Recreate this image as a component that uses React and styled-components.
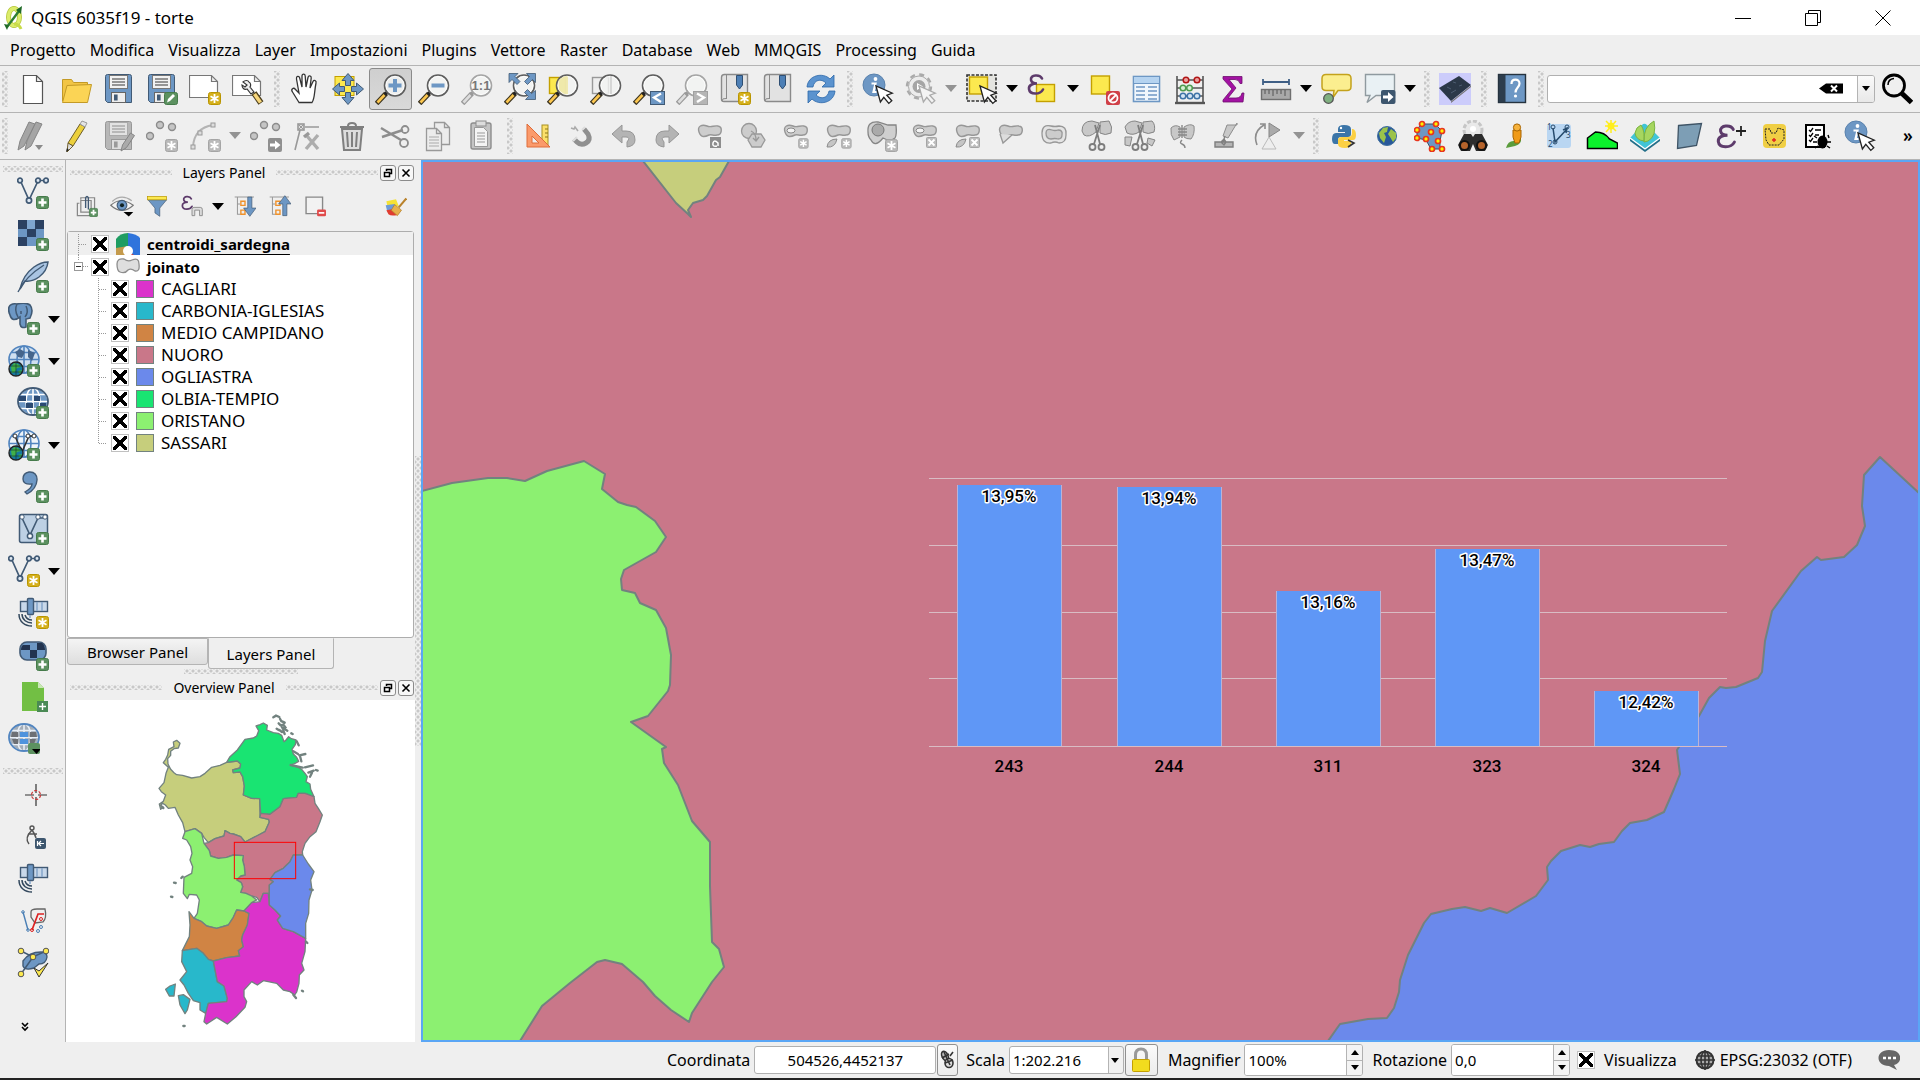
import React from "react";
import styled, { createGlobalStyle, css } from "styled-components";

const GlobalStyle = createGlobalStyle`
  * { box-sizing: border-box; }
  body {
    margin: 0;
    background: #efefef;
    color: #000;
    font-family: "Noto Sans", "Liberation Sans", sans-serif;
    font-size: 15px;
  }
  button, input, select {
    font: inherit;
    color: inherit;
    margin: 0;
    padding: 0;
  }
`;

const BLUE = "#6d97c4";
const NAVY = "#415a75";
const GRAY = "#b4b4b4";
const DARK = "#8c8c8c";
const OUTLINE = "#72827f";

/* ---------- shared icon parts ---------- */

const Svg = ({ size = 32, children }) => (
  <svg width={size} height={size} viewBox="0 0 32 32" fill="none" aria-hidden="true">
    {children}
  </svg>
);

const Plus = () => (
  <g>
    <rect x="19.5" y="19.5" width="12" height="12" rx="2" fill="#5c9160" stroke="#457a4a" />
    <path d="M25.5 21.5v8M21.5 25.5h8" stroke="#fff" strokeWidth="2.6" />
  </g>
);

const Star = ({ off }) => (
  <g>
    <rect
      x="19.5"
      y="19.5"
      width="12"
      height="12"
      rx="2"
      fill={off ? "#b9b9b9" : "#d5b01c"}
      stroke={off ? "#a5a5a5" : "#b99500"}
    />
    <path d="M25.5 21v9M21.5 23.2l8 4.6M29.5 23.2l-8 4.6" stroke="#fff" strokeWidth="1.8" />
  </g>
);

const Cross = () => (
  <g>
    <rect x="20.5" y="20.5" width="10" height="10" rx="1" fill="#bdbdbd" stroke="#a5a5a5" />
    <path d="M22.5 22.5l6 6M28.5 22.5l-6 6" stroke="#fff" strokeWidth="1.8" />
  </g>
);

const Lens = ({ off, children }) => (
  <g>
    <path d="M1.5 30.5L11 20.5" stroke={off ? "#999" : "#3c3420"} strokeWidth="5" />
    <path d="M2.5 29.5L9.5 22" stroke={off ? "#ddd" : "#fcc74f"} strokeWidth="2.6" />
    <path d="M10 21.5l3-3" stroke={off ? "#999" : "#222"} strokeWidth="3.4" />
    <circle cx="20" cy="12.5" r="10.5" fill="#f3f4f2" fillOpacity="0.8" stroke={off ? "#a5a5a5" : "#5e5e5e"} strokeWidth="1.6" />
    <circle cx="20" cy="12.5" r="9" stroke="#fff" strokeOpacity="0.8" />
    {children}
  </g>
);

const Cursor = ({ off }) => (
  <path
    d="M14 13l4.4 16 3.4-4.6 5 6 3-2.6-5-5.6 5.6-2z"
    fill={off ? "#f4f4f4" : "#fff"}
    stroke={off ? "#aaa" : "#222"}
    strokeWidth="1.3"
  />
);

const Floppy = ({ off }) => (
  <g>
    <path d="M2.5 3.5q0-2 2-2h22q2 0 2 2v26h-24l-2-2z" fill={off ? "#b7b7b7" : BLUE} stroke={off ? "#979797" : NAVY} />
    <rect x="6.5" y="2.5" width="18" height="13" fill={off ? "#e2e2e2" : "#f2f2f2"} stroke={off ? "#aaa" : "#777"} />
    <path d="M9 6h13M9 9h13M9 12h13" stroke={off ? "#aaa" : "#777"} strokeWidth="1.4" />
    <rect x="8.5" y="19.5" width="14" height="10" fill={off ? "#ddd" : "#eee"} stroke={off ? "#999" : "#666"} />
    <rect x="11" y="21.5" width="3.6" height="6" fill={off ? "#999" : NAVY} />
  </g>
);

const Blob = () => (
  <path
    d="M5 12C3 6 8 4 13 6c4 2 7-1 11 0 5 1 4 9-1 9-4 1-5-1-8 0-4 2-8 3-10-3z"
    fill="#cdcdcd"
    stroke="#979797"
    strokeWidth="1.4"
  />
);

const Scissors = () => (
  <g stroke="#7d7d7d" strokeWidth="1.8">
    <path d="M14 5l5 19M19 5l-6 19" />
    <circle cx="11.5" cy="27" r="3" />
    <circle cx="20.5" cy="27" r="3" />
  </g>
);

const Nodes = () => (
  <g stroke={NAVY} strokeWidth="1.7" fill="#dfe8f2">
    <path d="M3.5 4L12 23 21 4M23 3.5h6" fill="none" />
    <circle cx="3" cy="3.5" r="2.3" />
    <circle cx="12" cy="23.5" r="2.6" />
    <circle cx="21" cy="3.5" r="2.3" />
    <circle cx="29" cy="3.5" r="2.3" />
  </g>
);

const Globe = ({ fill = "#cfdff0", line = "#5285bf" }) => (
  <g stroke={line} strokeWidth="1.6">
    <ellipse cx="16" cy="14.5" rx="15" ry="13.5" fill={fill} />
    <ellipse cx="16" cy="14.5" rx="7" ry="13.5" />
    <path d="M1 14.5h30M16 1v27M4 7.5h24M4 21.5h24" />
  </g>
);

const Earth = () => (
  <g>
    <circle cx="8" cy="24" r="7" fill="#1578a0" stroke="#222" strokeWidth="1.4" />
    <path d="M3 22l3-4 4 1 3 3-4 1-2 4-3 1zM10 26l4-1-2 4z" fill="#40b04a" />
    <path d="M2 21h12M2 27h12M8 18v12" stroke="#153c2c" strokeWidth="0.7" />
  </g>
);

const Satellite = () => (
  <g>
    <rect x="3.5" y="4.5" width="10" height="10" fill="#c8d8ea" stroke={NAVY} strokeWidth="1.4" />
    <rect x="15.5" y="4.5" width="15" height="10" fill="#c8d8ea" stroke={NAVY} strokeWidth="1.4" />
    <rect x="10.5" y="1.5" width="6" height="16" rx="1" fill={BLUE} stroke={NAVY} strokeWidth="1.4" />
    <path d="M20 5v9M25 5v9M13 18v3" stroke="#8aa9cc" strokeWidth="1.6" />
    <path d="M2 17c0 8 6 12 13 12M5 17c0 6 5 9 10 9M8 18c1 3 3 5 7 5" stroke="#34495e" strokeWidth="1.5" />
  </g>
);

const Epsilon = ({ y = 0 }) => (
  <path
    transform={`translate(0 ${y})`}
    d="M15 5.5C13 1 3 1.5 4 7c.6 3 4 3.5 6 3.500C6 10.5 1.500 12 2 16c.8 6 11 6 14 .5"
    stroke="#5d3b6b"
    strokeWidth="2.6"
    strokeLinecap="round"
  />
);

const InfoDisc = () => (
  <g>
    <circle cx="12" cy="12" r="11" fill={BLUE} stroke="#5a82ad" />
    <circle cx="13.5" cy="6" r="1.9" fill="#fff" />
    <path d="M9.5 10.5h4l-2 8.500h3" stroke="#fff" strokeWidth="2.2" />
  </g>
);

const Page = ({ x = 0, y = 0 }) => (
  <path transform={`translate(${x} ${y})`} d="M3.5.5h10l5 5v17h-15zM13.5.5v5h5" fill="#ececec" stroke="#999" strokeWidth="1.3" />
);

const Bookmark = () => (
  <g>
    <path d="M2.5 4.5q0-3 3-3h23v27H5q-2.500 0-2.500-2.500z" fill="#e2e2e2" stroke="#8a8a8a" strokeWidth="1.4" />
    <path d="M7.5 2v24M3 28q0-3 4-2.500" stroke="#8a8a8a" />
    <path d="M17.5 2.500h6V12l-3 4-3-4z" fill="#4d7fb5" stroke="#2f4f73" />
  </g>
);

/* ---------- icons ---------- */

const ICONS = {
  newFile: <path d="M6.5 2.500h13l6 6v22h-19zM19.5 2.500v6h6" fill="#fff" stroke="#555" strokeWidth="1.2" />,
  open: (
    <g stroke="#c39a26">
      <path d="M2.5 28V6.500h9l2 3h14V14" fill="#f2c545" />
      <path d="M2.5 29.500L7 12.500l24.500-1-4 18z" fill="#fbd455" />
    </g>
  ),
  save: <Floppy />,
  saveAs: (
    <g>
      <Floppy />
      <rect x="18.5" y="19.5" width="13" height="12" rx="2" fill="#5c9160" stroke="#457a4a" />
      <path d="M21 29.500l1-3.500 5-5 2 2-5 5z" fill="#fff" />
    </g>
  ),
  newLayout: (
    <g>
      <path d="M.5 2.500h22l6 6v16H.5zM22.5 2.500v6h6" fill="#fff" stroke="#777" strokeWidth="1.2" />
      <Star />
    </g>
  ),
  layoutManager: (
    <g>
      <path d="M.5 2.500h22l6 6v14H.5zM22.5 2.500v6h6" fill="#fff" stroke="#777" strokeWidth="1.2" />
      <path d="M22 20l7 10" stroke="#4a3d1c" strokeWidth="6" />
      <path d="M22.5 21l6 8.500" stroke="#f6d57a" strokeWidth="3.6" />
      <path d="M11 9c2-2 5-2 6 0 2 1 2 4 1 5l4 5-3 2-4-5c-3 1-5-1-5-4l3 2 2-2z" fill="#eee" stroke="#333" strokeWidth="1.2" />
    </g>
  ),
  hand: (
    <path
      d="M10 29.500L3.500 19c-2-3 1-5 3-2.500L10 20 7.500 6c-.5-3 2.500-3.500 3.200-1L13 14 13 3c0-2.500 3-2.500 3.200 0L17 14l2-9.500c.5-2.500 3.500-2 3.200.5L21 15l3-6.500c1-2 3.700-1 3 1.500C25 20 26 25 23 29.500z"
      fill="#fff"
      stroke="#333"
      strokeWidth="1.3"
    />
  ),
  pan: (
    <g>
      <rect x="3" y="3.5" width="19" height="19" fill="#fce94f" stroke="#c4a000" />
      <path
        d="M16 .5l6 7h-3.500v5h-5v-5H10zM16 31.500l6-7h-3.500v-5h-5v5H10zM.5 16l7-6v3.500h5v5h-5V22zM31.500 16l-7-6v3.500h-5v5h5V22z"
        fill={BLUE}
        stroke={NAVY}
      />
    </g>
  ),
  zoomIn: (
    <Lens>
      <path d="M20 6v13M13.5 12.500h13" stroke={BLUE} strokeWidth="4" />
    </Lens>
  ),
  zoomOut: (
    <Lens>
      <path d="M13.5 12.500h13" stroke={BLUE} strokeWidth="4" />
    </Lens>
  ),
  zoomNative: (
    <Lens off>
      <text x="20" y="17" textAnchor="middle" fontSize="13" fontWeight="700" fill="#777" fontFamily="Liberation Sans, sans-serif">
        1:1
      </text>
    </Lens>
  ),
  zoomFull: (
    <g>
      <Lens />
      <path
        d="M5 .5h9l-3 3 5 5-3 3-5-5-3 3zM31.500.5v9l-3-3-5 5-3-3 5-5-3-3zM31.500 26.500h-10l3-3-4-4 3-3 4 4 4-3z"
        fill={BLUE}
        stroke={NAVY}
        strokeWidth="0.8"
      />
    </g>
  ),
  zoomSelection: (
    <g>
      <rect x="2.5" y="4.5" width="16" height="16" fill="#fce94f" stroke="#c4a000" strokeWidth="1.4" />
      <Lens />
      <path d="M11.500 7q8-6 9.500-3v17q-4 1-9-4z" fill="#eee6a0" fillOpacity="0.8" />
    </g>
  ),
  zoomLayer: (
    <g>
      <rect x="2.5" y="4.5" width="16" height="16" fill="#eee" stroke="#999" strokeWidth="1.4" />
      <Lens />
      <path d="M21 3v18" stroke="#bbb" />
    </g>
  ),
  zoomLast: (
    <g>
      <Lens />
      <rect x="17.5" y="18.5" width="14" height="13" fill={BLUE} stroke={NAVY} />
      <path d="M28 20.500l-7 4 7 4.500" stroke="#fff" strokeWidth="2.4" />
    </g>
  ),
  zoomNext: (
    <g>
      <Lens off />
      <rect x="17.5" y="18.5" width="14" height="13" fill="#b5b5b5" stroke="#a0a0a0" />
      <path d="M21 20.500l7 4-7 4.500" stroke="#fff" strokeWidth="2.4" />
    </g>
  ),
  bookmark: <Bookmark />,
  newBookmark: (
    <g>
      <Bookmark />
      <Star />
    </g>
  ),
  refresh: (
    <g fill="#5b93cf" stroke="#2c67a8" strokeWidth="0.8">
      <path d="M2 14C3 2 18-1 25 6l4-4v12H17l4-4C16 5 9 7 8 14z" />
      <path d="M30 18C29 30 14 33 7 26l-4 4V18h12l-4 4c5 5 12 3 13-4z" />
    </g>
  ),
  identify: (
    <g>
      <InfoDisc />
      <Cursor />
    </g>
  ),
  action: (
    <g>
      <circle cx="14" cy="13.5" r="12" fill="#ececec" stroke="#aaa" strokeWidth="2.4" strokeDasharray="5 4.4" />
      <circle cx="14" cy="13.5" r="10.5" fill="#ececec" stroke="#aaa" />
      <circle cx="14" cy="13.5" r="6.5" fill="#a5a5a5" />
      <path d="M12 10l6 3.500-6 3.500z" fill="#fff" />
      <Cursor off />
    </g>
  ),
  select: (
    <g>
      <rect x="1" y="2" width="29" height="26" fill="#e4e4e0" stroke="#333" strokeWidth="1.6" strokeDasharray="3 1.5" />
      <rect x="3.5" y="4" width="18" height="17" fill="#fce94f" stroke="#c4a000" strokeWidth="1.4" />
      <Cursor />
    </g>
  ),
  selectExpr: (
    <g>
      <rect x="9.5" y="11.5" width="18" height="17" fill="#fce94f" stroke="#c4a000" strokeWidth="1.4" />
      <Epsilon />
    </g>
  ),
  deselect: (
    <g>
      <rect x="3.5" y="3" width="18" height="18" fill="#fce94f" stroke="#c4a000" strokeWidth="1.4" />
      <rect x="18" y="18" width="14" height="14" rx="2" fill="#d04048" />
      <circle cx="25" cy="25" r="4.5" stroke="#fff" strokeWidth="1.8" />
      <path d="M28 22l-6 6" stroke="#fff" strokeWidth="1.8" />
    </g>
  ),
  table: (
    <g>
      <rect x="2.5" y="3.5" width="26" height="25" fill="#f0f6fc" stroke={BLUE} strokeWidth="1.6" />
      <rect x="3" y="4" width="25" height="6" fill="#b5d3f0" />
      <path d="M3 10.500h25" stroke={BLUE} />
      <path d="M5 14h9M17 14h9M5 18h9M17 18h9M5 22h9M17 22h9M5 26h9M17 26h9" stroke={BLUE} strokeWidth="1.6" />
    </g>
  ),
  abacus: (
    <g>
      <path d="M3 3v26M29 3v26M3 7h26M3 15h26M3 23h26" stroke="#555" strokeWidth="1.6" />
      <path d="M1 30h30" stroke="#555" strokeWidth="2.4" />
      <g fill="#eba0a0" stroke="#b01515" strokeWidth="1.5">
        <circle cx="12" cy="7" r="2.8" />
        <circle cx="23" cy="7" r="2.8" />
      </g>
      <g fill="#d5f0d5" stroke="#4f9a4f" strokeWidth="1.5">
        <circle cx="9" cy="15" r="2.8" />
        <circle cx="15.5" cy="15" r="2.8" />
      </g>
      <g fill="#d5e5f5" stroke="#3f74a8" strokeWidth="1.5">
        <circle cx="9" cy="23" r="2.8" />
        <circle cx="16" cy="23" r="2.8" />
        <circle cx="23" cy="23" r="2.8" />
      </g>
    </g>
  ),
  sigma: <path d="M6 3.500h19v7h-2q-1-4-5-4h-6l7 8.500-8 10h8q5 0 6-5h2l-1 9H6v-2l9-11L6 6z" fill="#a312a3" stroke="#6d0f6d" strokeWidth="0.8" />,
  ruler: (
    <g>
      <path d="M3 9h26M3 6v6M29 6v6" stroke="#3f5f85" strokeWidth="1.8" />
      <rect x="1.5" y="16.5" width="29" height="10" fill="#a9a9a9" stroke="#6f6f6f" strokeWidth="1.4" />
      <path d="M5 17v4M9 17v4M13 17v6M17 17v4M21 17v4M25 17v6" stroke="#555" />
    </g>
  ),
  mapTip: (
    <g>
      <path d="M5 1.500h21q4 0 4 4v8q0 4-4 4h-9l-5 7 1-7H5q-4 0-4-4v-8q0-4 4-4z" fill="#fbee8f" stroke="#c4a21c" strokeWidth="1.5" />
      <circle cx="7.5" cy="25.5" r="4.8" fill="#80b080" stroke="#555" strokeWidth="1.3" />
    </g>
  ),
  annotation: (
    <g>
      <path d="M1.500 1.500h29v21H12l-9 7 3-7H1.500z" fill="#e9f1f4" stroke="#8f9a9f" strokeWidth="1.4" />
      <rect x="17" y="17" width="14.5" height="14" rx="2" fill="#3d566e" />
      <path d="M19 22.500h5v-3.500l5.500 5-5.500 5v-3.500h-5z" fill="#fff" />
    </g>
  ),
  terrain: (
    <g>
      <rect width="32" height="32" fill="#ccccfb" />
      <path d="M0 15L20 3l12 9-20 16z" fill="#2b3848" />
      <path d="M12 28.500l20-16v1.500L12 30z" fill="#777" />
      <path d="M8 14l4 2M14 9l3 1M20 13l3-1M12 20l5-3" stroke="#4c5c70" />
    </g>
  ),
  help: (
    <g>
      <rect x="2.5" y="1.5" width="27" height="28" fill={BLUE} stroke="#26333f" strokeWidth="1.4" />
      <rect x="3" y="2" width="6.5" height="27" fill="#2d3d4d" />
      <path d="M15.500 11c0-6 8-5.500 8-.5 0 4-4 4-4 9" stroke="#fff" strokeWidth="2.2" />
      <circle cx="19.5" cy="23" r="1.6" fill="#fff" />
    </g>
  ),
  bigLens: (
    <g stroke="#000">
      <circle cx="13" cy="12.5" r="10.5" strokeWidth="2.8" />
      <path d="M7 12q0-6 6-6.500" strokeWidth="1.5" />
      <path d="M21 20.500l9.500 9" strokeWidth="5" />
    </g>
  ),

  pencils: (
    <g fill="#a5a5a5" stroke="#858585">
      <path d="M1 30l2-9L12 2l6 2L7 26z" />
      <path d="M8 30l2-9L19 2l6 2-11 22z" />
      <path d="M18 25h8l-4 5z" fill="#8a8a8a" stroke="none" />
    </g>
  ),
  pencil: (
    <g stroke="#6d5d2a">
      <path d="M8 23L20 4l5 3-12 19z" fill="#ecd03c" />
      <path d="M8 23l5 3-6 6z" fill="#ddd" />
      <path d="M20 4l2-3 5 2-2 4z" fill="#e4e4e4" stroke="#999" />
      <path d="M7 28l-1 4 3-2z" fill="#222" stroke="none" />
    </g>
  ),
  saveEdits: (
    <g>
      <Floppy off />
      <path d="M18 31l1.500-6 8-12 4 2.500-8 12z" fill="#aaa" stroke="#858585" />
    </g>
  ),
  addPoints: (
    <g>
      <g fill="#c5c5c5" stroke={DARK} strokeWidth="1.4">
        <circle cx="14" cy="5" r="3.5" />
        <circle cx="26" cy="7" r="3.5" />
        <circle cx="4" cy="16" r="3.5" />
      </g>
      <Star off />
    </g>
  ),
  addCurve: (
    <g>
      <path d="M4 27Q5 8 24 5" stroke={GRAY} strokeWidth="2" />
      <g fill="#ddd" stroke="#999">
        <rect x="2" y="25" width="4" height="4" />
        <rect x="9" y="11" width="4" height="4" />
        <rect x="22" y="3" width="4" height="4" />
      </g>
      <Star off />
    </g>
  ),
  movePoints: (
    <g>
      <g fill="#c5c5c5" stroke={DARK} strokeWidth="1.4">
        <circle cx="14" cy="5" r="3.5" />
        <circle cx="26" cy="7" r="3.5" />
        <circle cx="4" cy="16" r="3.5" />
      </g>
      <rect x="18" y="18" width="14" height="14" rx="2" fill="#8f8f8f" />
      <path d="M20 23.500h5v-3l5.500 4.500-5.500 4.500v-3h-5z" fill="#fff" />
    </g>
  ),
  nodeTool: (
    <g stroke="#999" strokeWidth="1.6">
      <path d="M2 30L7 10M12 7h14" />
      <rect x="5" y="4" width="6" height="6" fill="#ddd" />
      <path d="M5 4l6 6M11 4l-6 6" strokeWidth="1" />
      <path d="M14 16l11 13M25 15L13 29" stroke="#adadad" strokeWidth="3.4" />
      <path d="M11 17l5-4" strokeWidth="3.4" />
    </g>
  ),
  trash: (
    <g stroke="#7f7f7f" strokeWidth="2">
      <path d="M6 9l2 21h16l2-21z" fill="#ddd" />
      <path d="M4 7h24M12 6q0-3 4-3t4 3M11 12l1 15M16 12v15M21 12l-1 15" />
    </g>
  ),
  cut: (
    <g stroke="#8d8d8d" strokeWidth="1.8">
      <path d="M2 8l20 12M3 17l21-7" strokeWidth="2.4" />
      <circle cx="26" cy="9.5" r="3.5" />
      <circle cx="25" cy="23" r="4" />
    </g>
  ),
  copy: (
    <g>
      <Page x={9} y={2} />
      <Page x={1} y={8} />
      <path d="M7 17h10M7 20h10M7 23h10M7 26h10" stroke="#aaa" />
    </g>
  ),
  paste: (
    <g>
      <rect x="6" y="3" width="20" height="26" rx="2" fill="#c4c4c4" stroke="#8d8d8d" strokeWidth="1.4" />
      <rect x="11" y="1" width="10" height="5" fill="#ddd" stroke="#8d8d8d" />
      <path d="M9.500 7.500h9l4 4v15h-13z" fill="#f4f4f4" stroke="#999" />
      <path d="M12 13h8M12 16h8M12 19h8M12 22h8" stroke="#999" />
    </g>
  ),
  setSquare: (
    <g>
      <rect x="20" y="5" width="6" height="20" fill="#fce06a" stroke="#a89020" />
      <path d="M23 9h3M23 13h3M23 17h3" stroke="#8a7618" />
      <path d="M5 4v23h23zM10 16l7 7h-7z" fill="#fb9a6b" fillRule="evenodd" stroke="#de6c3a" />
    </g>
  ),
  magnet: (
    <g>
      <path d="M19 9l4 5q3 6-2 9t-9-1l-3-3" stroke="#909090" strokeWidth="5" />
      <path d="M20 7l-3 3M12 17l-4 4" stroke="#ddd" strokeWidth="2" />
      <path d="M6 8l3 1 1-2 3 4" stroke="#aaa" strokeWidth="1.6" />
    </g>
  ),
  undo: <path d="M4 14l10-9v6h4q9 0 9 9 0 6-8 7v-5q4-5-1-5h-4v6z" fill={GRAY} stroke="#979797" />,
  redo: <path d="M28 14L18 5v6h-4q-9 0-9 9 0 6 8 7v-5q-4-5 1-5h4v6z" fill={GRAY} stroke="#979797" />,
  rotateFeature: (
    <g>
      <Blob />
      <rect x="16" y="17" width="11" height="11" fill="#8d8d8d" />
      <path d="M24 26v-3q-4-4-5 0t4 3" stroke="#fff" strokeWidth="1.5" />
    </g>
  ),
  simplify: (
    <g fill="#ccc" stroke="#999" strokeWidth="1.3">
      <circle cx="12" cy="11" r="7.5" />
      <path d="M15 14h9l4 6-4 7h-9l-4-7z" />
      <path d="M14 11q5 2 5 9M16 18l3 3 3-4" fill="none" />
    </g>
  ),
  addRing: (
    <g>
      <Blob />
      <ellipse cx="11" cy="10.5" rx="4" ry="2.5" fill="#f4f4f4" stroke="#888" />
      <g transform="translate(3 3) scale(.8)">
        <Star off />
      </g>
    </g>
  ),
  addPart: (
    <g>
      <Blob />
      <path d="M4 27q1-8 10-8-2 9-10 8z" fill="#c5c5c5" stroke={DARK} />
      <g transform="translate(3 3) scale(.8)">
        <Star off />
      </g>
    </g>
  ),
  fillRing: (
    <g>
      <path d="M2 12Q1 1 12 2l10 3h8q1 10-1 13-5 4-12 0-8 10-12 2-3-3-3-8z" fill="#cfcfcf" stroke="#858585" strokeWidth="1.3" />
      <circle cx="12" cy="10" r="6" fill="#aaa" stroke="#777" />
      <Star off />
    </g>
  ),
  deleteRing: (
    <g>
      <Blob />
      <ellipse cx="11" cy="10.5" rx="4" ry="2.5" fill="#f4f4f4" stroke="#888" />
      <g transform="translate(-3 -3)">
        <Cross />
      </g>
    </g>
  ),
  deletePart: (
    <g>
      <Blob />
      <path d="M4 27q1-8 10-8-2 9-10 8z" fill="#c5c5c5" stroke={DARK} />
      <g transform="translate(-3 -3)">
        <Cross />
      </g>
    </g>
  ),
  reshape: (
    <g>
      <Blob />
      <path d="M5 14l3 9 9-8" fill="#ddd" stroke="#979797" strokeWidth="1.3" />
    </g>
  ),
  offsetCurve: (
    <g fill="#e4e4e4" stroke="#979797" strokeWidth="1.3">
      <path d="M4 13Q4 4 13 6q4 1 8 0 8 0 7 9 0 8-7 8-4-2-8 0-9 1-9-10z" />
      <path d="M8 13q0-5 6-3 3 1 6 0 5 0 4 5 0 4-4 4-3-1-7 0-5 0-5-6z" fill="#ccc" />
    </g>
  ),
  splitFeatures: (
    <g>
      <path d="M1 11Q1 1 11 1l7 2-3 9q-7 6-12 3zM19 2l9-1q4 6 2 12-6 3-11 0z" fill="#c8c8c8" stroke="#858585" />
      <Scissors />
    </g>
  ),
  splitParts: (
    <g>
      <path d="M1 7q3-6 10-6l7 2-3 9q-6 4-12 1zM19 2l9-1q4 4 2 11-6 3-11 0zM1 17l7 0-2 9-5-1zM24 18l7 2-3 6-5-3z" fill="#c8c8c8" stroke="#858585" />
      <Scissors />
    </g>
  ),
  merge: (
    <g>
      <path d="M4 8q4-4 9-1v10l-6 3q-4-5-3-12zM17 7q6-4 10-1 1 8-3 13-5 0-7-2z" fill="#c8c8c8" stroke={DARK} />
      <path d="M11 9h9M11 12h9M11 15h9M15 5v13M15 20q-3 3 0 4t3 4" stroke="#888" strokeWidth="1.4" />
    </g>
  ),
  pen: (
    <g>
      <path d="M27 3L18 18l-5-2 4-11h10z" fill="#c8c8c8" stroke="#8d8d8d" />
      <path d="M15 16l-2 6M5 22h18v5H5zM11 22l3-3 2 3-2 3z" fill="#b5b5b5" stroke="#7f7f7f" strokeWidth="1.4" />
    </g>
  ),
  rotateSymbols: (
    <g>
      <path d="M16 3l11 7-11 7z" fill="#aaa" stroke="#858585" />
      <path d="M16 17l-7 12h14z" fill="#eee" stroke="#bbb" />
      <path d="M4 25Q-1 12 11 5M7 4h5v5" stroke="#8d8d8d" strokeWidth="1.6" />
    </g>
  ),

  python: (
    <g>
      <path d="M16 5q-6 0-6 4v3h7v1H8q-4 0-4 6 0 5 3 5h3v-4q0-3 3-3h7q3 0 3-3V9q0-4-7-4z" fill="#3b75a8" />
      <path d="M17 28q6 0 6-4v-3h-7v-1h9q3 0 3-5 0-5-3-6h-1v4q0 4-4 4h-6q-4 0-4 3v4q0 4 7 4z" fill="#fcd043" />
      <circle cx="13" cy="8" r="1.2" fill="#fff" />
      <path d="M20 20l6 3-6 4" stroke="#333" strokeWidth="1.6" />
    </g>
  ),
  earth: (
    <g>
      <circle cx="16" cy="16" r="9.5" fill="#28589a" stroke="#3f6f9f" />
      <path d="M8 13l4-5 5-1-1 5-3 1 2 4-2 6-4-5zM20 9l5 4v5l-3 4-3-5-2-3z" fill="#9cc34a" />
    </g>
  ),
  vertices: (
    <g>
      <path d="M7 4h14l7 7-2 10v8h-9l-5-9-9-2V10z" fill={BLUE} stroke="#3c4f66" />
      <g fill="#fff200" stroke="#e8351e" strokeWidth="1.7">
        <circle cx="8" cy="4" r="2.5" />
        <circle cx="22" cy="4" r="2.5" />
        <circle cx="3" cy="10" r="2.5" />
        <circle cx="28" cy="11" r="2.5" />
        <circle cx="17" cy="12" r="2.5" />
        <circle cx="3" cy="18" r="2.5" />
        <circle cx="12" cy="19" r="2.5" />
        <circle cx="24" cy="21" r="2.5" />
        <circle cx="18" cy="29" r="2.5" />
        <circle cx="28" cy="29" r="2.5" />
      </g>
    </g>
  ),
  binoculars: (
    <g>
      <circle cx="16" cy="10" r="9" fill="#e9e9e9" stroke="#c6c6c6" strokeWidth="3" strokeDasharray="4 2" />
      <circle cx="16" cy="9" r="3" fill="#fff" />
      <path d="M1 25L7 14h7l2 3 2-3h7l6 11-3 6h-9l-3-7-3 7H4z" fill="#2d2d2d" />
      <circle cx="7.5" cy="25.5" r="4.5" fill="#b5632b" stroke="#111" strokeWidth="2" />
      <circle cx="24.5" cy="25.5" r="4.5" fill="#b5632b" stroke="#111" strokeWidth="2" />
    </g>
  ),
  streetView: (
    <g>
      <path d="M6 28q2-8 9-7l6-3q1 6-6 8z" fill="#5a9c3c" />
      <path d="M13 10h8v7l-2 6h-4l-2-6z" fill="#f09a18" stroke="#a86400" />
      <circle cx="17" cy="7.5" r="3.6" fill="#f6b23c" stroke="#a86400" />
    </g>
  ),
  pointPath: (
    <g>
      <rect x="4" y="4" width="24" height="24" rx="3" fill="#b9d6f2" />
      <path d="M10 8l2 14L24 9M20 10l4-2-1 5" stroke="#274b6d" strokeWidth="1.5" />
      <circle cx="10" cy="7" r="2" stroke="#274b6d" />
      <circle cx="12" cy="22" r="2" stroke="#274b6d" />
      <circle cx="24" cy="7" r="2" stroke="#274b6d" />
      <text x="4" y="10" fontSize="8" fill="#274b6d">1</text>
      <text x="5" y="27" fontSize="8" fill="#274b6d">2</text>
      <text x="23" y="18" fontSize="8" fill="#274b6d">3</text>
    </g>
  ),
  profile: (
    <g>
      <path d="M1.500 28.500V18l8-6q9 0 14 7l8 4v5.500z" fill="#0cf22c" stroke="#000" strokeWidth="1.5" />
      <path d="M19 6h13M25 0v13M20 1l10 10M30 1L20 12" stroke="#ffee1c" strokeWidth="1.5" />
      <circle cx="25" cy="6" r="3.5" fill="#ffee1c" />
    </g>
  ),
  leaf: (
    <g>
      <path d="M1 18v3l15 11 15-11v-3z" fill="#24708a" />
      <path d="M1 18L14 4q2-1 4 1l13 13-15 11z" fill="#41c4d6" />
      <path d="M1 18l15 11 15-11" stroke="#fff" strokeWidth="1.4" />
      <path d="M6 13q1-6 6-8 4 6 3 16-8-1-9-8zM15 22Q14 7 25 1q3 15-6 20z" fill="#a6d65f" stroke="#7bb342" />
    </g>
  ),
  parallelogram: <path d="M6.500 5.500l23-2-5 22-19 3z" fill="#7d9eb5" stroke="#3f5466" strokeWidth="1.3" />,
  epsilonPlus: (
    <g>
      <g transform="translate(1 2) scale(1.15)">
        <Epsilon y={1} />
      </g>
      <path d="M26 6v10M21 11h10" stroke="#222" strokeWidth="1.8" />
    </g>
  ),
  yellowMap: (
    <g>
      <rect x="5" y="4" width="23" height="24" rx="4" fill="#f0cf45" />
      <path d="M7 9h5l1 4h5l2-5 6 2v9l-5 6h-10l-3-5z" stroke="#222" strokeDasharray="2 1" />
      <path d="M16 18v4M14 20h4" stroke="#e02020" strokeWidth="1.4" />
    </g>
  ),
  bugList: (
    <g>
      <path d="M5 5h18v22H5z" fill="#fff" stroke="#000" strokeWidth="2" />
      <path d="M8 10l1.500 1.500L12 8M14 10h6M8 15l1.500 1.500L12 13M14 15h4M8 20l1.500 1.500L12 18" stroke="#000" strokeWidth="1.3" />
      <path d="M16 18l-3-2M16 22h-4M17 26l-3 2M28 18l-1-3M26 22h4M26 26l3 2" stroke="#000" strokeWidth="1.4" />
      <ellipse cx="21.5" cy="22" rx="5" ry="6.5" fill="#000" />
    </g>
  ),

  addVector: (
    <g>
      <Nodes />
      <Plus />
    </g>
  ),
  newVector: (
    <g>
      <Nodes />
      <Star />
    </g>
  ),
  addRaster: (
    <g>
      <rect x="1" y="1" width="26" height="26" fill={BLUE} />
      <path d="M1 1h9v9H1zM18 1h9v9h-9zM10 10h9v8h-9zM1 18h9v9H1z" fill="#2b4162" />
      <path d="M10 1h8v9h-8z" fill="#7fa6d0" />
      <Plus />
    </g>
  ),
  addFeather: (
    <g>
      <path d="M3 28Q6 14 17 6q7-5 14-5-1 9-9 15-7 5-14 4z" fill="#a9c4e2" stroke={NAVY} strokeWidth="1.5" />
      <path d="M1 31Q8 16 27 4" stroke={NAVY} strokeWidth="1.4" />
      <Plus />
    </g>
  ),
  postgis: (
    <g>
      <path
        d="M1 4q2-4 8-3 9-2 13 1 4 5 0 13l-4 1v8q-5 2-6-3v-7q-8 6-10-2Q0 8 1 4z"
        fill={BLUE}
        stroke={NAVY}
        strokeWidth="1.6"
      />
      <path d="M9 1Q6 7 10 14M18 3q3 6-1 11M13 8v3" stroke={NAVY} strokeWidth="1.5" />
      <Plus />
    </g>
  ),
  wmsGlobe: (
    <g>
      <Globe />
      <path d="M7 7l5-3 5 3-3 6-4-1zM20 5l7 3-3 8-4-4zM9 16l4 2-1 6z" fill="#45658c" />
      <Earth />
      <Plus />
    </g>
  ),
  wcsGlobe: (
    <g>
      <Globe fill={BLUE} line="#fff" />
      <ellipse cx="16" cy="14.5" rx="15" ry="13.5" stroke={NAVY} strokeWidth="1.8" />
      <path d="M2 9h7v5H2zM17 9h6v5h-6zM9 16h7v5H9zM23 16h6v5h-6z" fill="#2b4a72" />
      <Plus />
    </g>
  ),
  wfsGlobe: (
    <g>
      <Globe fill="#eef4fa" />
      <path d="M7 7l7 16 7-16h5" stroke="#333" strokeWidth="1.6" />
      <circle cx="7" cy="7" r="2" fill="#fff" stroke="#333" />
      <circle cx="20" cy="7" r="2" fill="#fff" stroke="#333" />
      <circle cx="26" cy="7" r="2" fill="#fff" stroke="#333" />
      <Earth />
      <Plus />
    </g>
  ),
  comma: (
    <g>
      <path d="M12 1c11-1 11 15-2 22l-2-2q7-4 7-8-9 1-9-5 0-6 6-7z" fill={BLUE} stroke={NAVY} strokeWidth="1.4" />
      <Plus />
    </g>
  ),
  virtualLayer: (
    <g>
      <rect x="2.5" y="1.5" width="28" height="28" rx="2" fill="#bdd0e4" stroke={NAVY} strokeWidth="1.5" />
      <path d="M5 5l8 17 8-17h7" stroke={NAVY} strokeWidth="1.6" />
      <circle cx="5" cy="4" r="2.2" fill="#fff" stroke={NAVY} />
      <circle cx="13" cy="23" r="2.6" fill="#fff" stroke={NAVY} strokeWidth="1.5" />
      <circle cx="21" cy="4" r="2.2" fill="#fff" stroke={NAVY} />
      <circle cx="28" cy="4" r="2.2" fill="#fff" stroke={NAVY} />
      <Plus />
    </g>
  ),
  satelliteNew: (
    <g>
      <Satellite />
      <Star />
    </g>
  ),
  satellite: <Satellite />,
  database: (
    <g>
      <rect x="3" y="3" width="26" height="18" rx="7" fill={BLUE} stroke={NAVY} strokeWidth="1.6" />
      <path d="M6 6h7v5H4q0-4 2-5zM20 4h5q3 2 3 7h-8zM13 11h7v8h-7z" fill="#22334f" />
      <Plus />
    </g>
  ),
  greenDoc: (
    <g>
      <path d="M5 1h16l6 6v23H5z" fill="#72bf44" />
      <path d="M21 1l6 6h-6z" fill="#c9e8b5" />
      <rect x="20" y="20" width="11" height="11" fill="#4a8a55" />
      <path d="M25.500 22v7M22 25.500h7" stroke="#fff" strokeWidth="1.4" />
    </g>
  ),
  globeMenu: (
    <g>
      <Globe fill="#a3adb8" line="#e8eef5" />
      <ellipse cx="16" cy="14.5" rx="15" ry="13.5" stroke="#5285bf" strokeWidth="1.8" />
      <path d="M12 9h8v5h-8zM12 16h8v5h-8z" fill="#4f93dd" />
      <path d="M4 9h6v5H3zM22 9h6l1 5h-7zM4 16h6v5H6zM22 16h6l-2 5h-4z" fill="#6d7075" />
      <rect x="20" y="20" width="12" height="11" rx="2" fill="#5c9160" />
      <path d="M24 26h9l-4.500 5z" fill="#000" />
    </g>
  ),
  crosshair: (
    <g>
      <path d="M19 5v9M19 18v9M8 16h9M21 16h9" stroke="#333" strokeWidth="1.2" />
      <circle cx="19" cy="16" r="4.5" stroke="#c33" strokeWidth="1.2" strokeDasharray="3 1.7" />
    </g>
  ),
  compass: (
    <g>
      <path d="M15 9q-8 8-3 14M15 9q3 4 4 8M11 13h9" stroke="#555" strokeWidth="1.5" />
      <circle cx="15" cy="7" r="2" stroke="#555" strokeWidth="1.4" />
      <rect x="18" y="17" width="11" height="11" rx="2" fill="#3d566e" />
      <path d="M27 22.500h-5M24 20l-2.500 2.500L24 25M20.500 20v5" stroke="#fff" strokeWidth="1.2" />
    </g>
  ),
  digitizeRed: (
    <g>
      <path d="M6 7l5 18" stroke="#4a7fb5" strokeWidth="1.4" />
      <path d="M14 7q0-3 6-3h8q2 9-2 13l-8 1-4-6z" stroke="#666" strokeWidth="1.3" />
      <path d="M15 25l6-16h6" stroke="#d22" strokeWidth="1.7" />
      <circle cx="24" cy="14" r="1.5" stroke="#d22" />
      <circle cx="15" cy="25" r="1.5" stroke="#d22" />
      <circle cx="21" cy="26" r="1.5" stroke="#4a7fb5" />
      <circle cx="24" cy="22" r="1.5" stroke="#4a7fb5" />
      <circle cx="11" cy="25" r="1.3" stroke="#4a7fb5" />
      <circle cx="6" cy="7" r="1.3" stroke="#4a7fb5" />
    </g>
  ),
  topology: (
    <g>
      <path d="M6 14q6-9 18-9 6 0 6 5-1 7-8 7l-5 4q-9 3-11-2z" fill={BLUE} stroke={NAVY} strokeWidth="1.4" />
      <path d="M4 4l12 6 13-6M16 10L4 27" stroke={NAVY} strokeWidth="1.5" />
      <g fill="#fce94f" stroke="#555">
        <circle cx="4" cy="4" r="2.8" />
        <circle cx="29" cy="4" r="2.8" />
        <circle cx="16" cy="10" r="2.8" />
        <circle cx="4" cy="27" r="2.8" />
      </g>
      <path d="M17 21l5 3 9-8-9 14z" fill="#fce94f" stroke="#333" />
    </g>
  ),

  addGroup: (
    <g>
      <path d="M7 7V4h20v20h-3M5 12H2v18h18M7 8h15v17H7z" stroke="#888" strokeWidth="1.8" />
      <path d="M14 19V4q2-4 4 0v17" stroke={NAVY} strokeWidth="2" />
      <Plus />
    </g>
  ),
  eye: (
    <g>
      <path d="M1 15Q14 3 31 15 16 29 1 15z" fill="#f5f5f5" stroke="#777" strokeWidth="1.5" />
      <path d="M3 10Q15-1 29 9" stroke="#aaa" strokeWidth="1.6" />
      <circle cx="16" cy="15" r="6.5" fill={BLUE} stroke={NAVY} strokeWidth="1.5" />
      <circle cx="16" cy="15" r="2.7" fill="#122" />
      <path d="M18 24h13l-6 6z" fill="#000" />
    </g>
  ),
  filter: (
    <g>
      <path d="M3 7h27L20 19v12l-7-5v-7z" fill={BLUE} stroke={NAVY} />
      <rect x="2" y="2" width="28" height="5" fill="#fce94f" stroke="#b99500" />
    </g>
  ),
  filterExpr: (
    <g>
      <Epsilon />
      <path d="M16 30v-9q0-3 3-3h9q3 0 3 3v9h-4v-8h-7v8z" fill="#ddd" stroke="#888" strokeWidth="1.3" />
    </g>
  ),
  expand: (
    <g>
      <path d="M1 3h28M5 3v25h5M5 13h4" stroke="#999" strokeWidth="1.5" />
      <path d="M10 9h6v6h-6zM10 22h6v6h-6z" stroke="#f0912a" strokeWidth="2" />
      <path d="M20 3h6v16h6L23 31l-9-12h6z" fill={BLUE} stroke={NAVY} />
    </g>
  ),
  collapse: (
    <g>
      <path d="M1 3h28M5 3v25h5M5 13h4" stroke="#999" strokeWidth="1.5" />
      <path d="M10 9h6v6h-6zM10 22h6v6h-6z" stroke="#f0912a" strokeWidth="2" />
      <path d="M20 30h6V13h6L23 1l-9 12h6z" fill={BLUE} stroke={NAVY} />
    </g>
  ),
  removeLayer: (
    <g>
      <path d="M3 3h24v24H3z" fill="#f2f2f2" stroke="#888" strokeWidth="2" />
      <rect x="19" y="21" width="13" height="10" rx="2" fill="#e04a4a" />
      <path d="M21.500 26h8" stroke="#fff" strokeWidth="2.4" />
    </g>
  ),
  broom: (
    <g>
      <path d="M2 9l14-3 4 10-16 3z" fill="#f5e235" />
      <path d="M1 15l13-2 3 8-14 2z" fill="#6e9bd8" />
      <path d="M2 22l12-2 4 9q-9 2-13-1z" fill="#e03c30" />
      <path d="M14 14l10 8-6 8-9-8z" fill="#e8b04c" stroke="#b07c28" />
      <path d="M20 18L31 5" stroke="#b9822c" strokeWidth="3" />
    </g>
  ),
};

const Icon = ({ name, size }) => <Svg size={size}>{ICONS[name]}</Svg>;

/* ---------- window frame ---------- */

const Window = styled.div`
  height: 100vh;
  min-width: 1280px;
  display: flex;
  flex-direction: column;
  border-bottom: 2px solid #232323;
`;

const TitleBar = styled.header`
  height: 35px;
  display: flex;
  align-items: center;
  background: #fff;
  padding: 0 2px 0 3px;
`;

const Title = styled.h1`
  flex: 1;
  margin: 0 0 0 6px;
  font-size: 17px;
  font-weight: 400;
`;

const FrameButton = styled.button`
  width: 70px;
  height: 34px;
  border: 0;
  background: none;
  display: grid;
  place-items: center;
`;

const MenuBar = styled.nav`
  height: 31px;
  display: flex;
  align-items: center;
  padding-left: 3px;
  border-bottom: 1px solid #b4b4b4;
  font-size: 16px;
`;

const MenuButton = styled.button`
  border: 0;
  background: none;
  padding: 0 7px;
  line-height: 24px;
`;

/* ---------- toolbars ---------- */

const Toolbar = styled.div`
  height: 47px;
  display: flex;
  align-items: center;
  overflow: hidden;
  padding: 0 2px 1px 0;
  border-bottom: 1px solid #b4b4b4;
`;

const dots = css`
  background-image: radial-gradient(circle, #c8c8c8 1px, transparent 2px),
    radial-gradient(circle, #c8c8c8 1px, transparent 2px);
  background-size: 6px 6px;
`;

const Handle = styled.span`
  flex: none;
  width: ${(p) => p.$width || 14}px;
  height: 36px;
  ${dots}
  background-position: 0 0, 3px 3px;
  background-clip: content-box;
  padding: 0 3px 0 ${(p) => (p.$width || 14) - 9}px;
`;

const ToolButton = styled.button`
  flex: none;
  width: 43px;
  height: 42px;
  display: grid;
  place-items: center;
  border: 1px solid ${(p) => (p.$on ? "#8a8a8a" : "transparent")};
  border-radius: 3px;
  background: ${(p) => (p.$on ? "linear-gradient(#cfcfcf, #d9d9d9)" : "none")};
`;

const ArrowButton = styled.button`
  flex: none;
  width: 18px;
  height: 36px;
  border: 0;
  background: none;
  display: grid;
  place-items: center;
  &::before {
    content: "";
    border: 6px solid transparent;
    border-top: 7px solid ${(p) => (p.$off ? "#939393" : "#000")};
    border-bottom: 0;
  }
`;

const SearchBox = styled.div`
  flex: 1;
  height: 28px;
  display: flex;
  align-items: center;
  border: 1px solid #b0b0b0;
  border-radius: 3px;
  background: #fff;
  overflow: hidden;
`;

const SearchInput = styled.input`
  flex: 1;
  min-width: 0;
  border: 0;
  outline: 0;
  padding: 0 6px;
`;

const ClearButton = styled.button`
  border: 0;
  background: none;
  width: 52px;
  height: 24px;
  display: grid;
  place-items: center;
`;

const DropButton = styled.button`
  width: 17px;
  align-self: stretch;
  border: 0;
  border-left: 1px solid #b4b4b4;
  background: linear-gradient(#fafafa, #e8e8e8);
  display: grid;
  place-items: center;
  &::before {
    content: "";
    border: 4px solid transparent;
    border-top: 5px solid #000;
    border-bottom: 0;
  }
`;

const Overflow = styled.button`
  margin-left: auto;
  border: 0;
  background: none;
  width: 20px;
  font-size: 17px;
  font-weight: 600;
`;

/* ---------- body ---------- */

const Body = styled.div`
  flex: 1;
  min-height: 0;
  display: flex;
`;

const SideBar = styled.aside`
  flex: none;
  width: 66px;
  border-right: 1px solid #b4b4b4;
  display: flex;
  flex-direction: column;
  align-items: center;
  padding-bottom: 1px;
`;

const SideRow = styled.div`
  display: flex;
  align-items: center;
`;

const SideHandle = styled.span`
  width: 60px;
  height: ${(p) => (p.$middle ? 14 : 12)}px;
  padding: ${(p) => (p.$middle ? 8 : 6)}px 0 0;
  ${dots}
  background-origin: content-box;
  background-position: 0 0, 3px 3px;
  background-clip: content-box;
`;

const ArrowSpace = styled.span`
  width: 18px;
`;

const SideOverflow = styled(Overflow)`
  margin: auto 16px 2px 0;
  height: 24px;
  line-height: 18px;
  svg {
    display: block;
    margin: 0 auto;
  }
`;

const Dock = styled.div`
  flex: none;
  width: 349px;
  display: flex;
  flex-direction: column;
`;

const PanelHead = styled.div`
  height: 25px;
  display: flex;
  align-items: center;
  gap: 2px;
  padding: 0 1px 0 4px;
`;

const PanelTitle = styled.h2`
  margin: 0 9px;
  font-size: 14px;
  font-weight: 400;
`;

const Grip = styled.span`
  flex: ${(p) => (p.$width ? "none" : 1)};
  width: ${(p) => (p.$width ? p.$width + "px" : "auto")};
  height: 5px;
  ${dots}
  background-position: 0 -1px, 3px 2px;
`;

const PanelButton = styled.button`
  width: 16px;
  height: 16px;
  border: 1px solid #8b8b8b;
  border-radius: 3px;
  background: #f7f7f7;
  display: grid;
  place-items: center;
`;

const PanelTools = styled.div`
  height: 42px;
  margin-bottom: 4px;
  display: flex;
  align-items: center;
  padding: 0 2px 0 3px;
`;

const SmallTool = styled.button`
  width: 35px;
  height: 30px;
  border: 0;
  background: none;
  display: grid;
  place-items: center;
  margin-left: ${(p) => (p.$last ? "auto" : 0)};
`;

const Tree = styled.ul`
  flex: none;
  height: 407px;
  margin: 0 1px;
  padding: 0;
  list-style: none;
  background: #fff;
  border: 1px solid #adadad;
  border-radius: 3px;
`;

const TreeRow = styled.li`
  height: ${(p) => (p.$child ? 22 : 23)}px;
  background: ${(p) => (p.$current ? "#efefef" : "none")};
  label {
    height: 100%;
    display: flex;
    align-items: center;
    gap: 7px;
  }
`;

const LayerName = styled.span`
  font-size: ${(p) => (p.$group ? 15 : 17)}px;
  font-weight: ${(p) => (p.$group ? 700 : 400)};
  text-decoration: ${(p) => (p.$current ? "underline" : "none")};
  text-decoration-skip-ink: none;
  text-underline-offset: 4px;
  line-height: 22px;
`;

const Lines = styled.svg`
  flex: none;
  display: block;
  margin-right: -7px;
`;

const Check = styled.input`
  flex: none;
  appearance: none;
  width: 18px;
  height: 18px;
  border: 1px solid #c0c0c0;
  background-color: #fff;
  &:checked {
    background-image: linear-gradient(45deg, transparent 41%, #000 42% 58%, transparent 59%),
      linear-gradient(-45deg, transparent 41%, #000 42% 58%, transparent 59%);
    background-size: 14px 14px;
    background-position: center;
    background-repeat: no-repeat;
  }
`;

const Swatch = styled.span`
  width: 18px;
  height: 18px;
  border: 1px solid ${OUTLINE};
  background: ${(p) => p.$color};
`;

const Tabs = styled.div`
  height: 31px;
  display: flex;
  align-items: flex-start;
  padding-left: 1px;
`;

const Tab = styled.button`
  height: ${(p) => (p.$active ? 31 : 27)}px;
  width: ${(p) => (p.$active ? 126 : 141)}px;
  border: 1px solid #b4b4b4;
  border-radius: 0 0 3px 3px;
  border-top-color: ${(p) => (p.$active ? "#efefef" : "#b4b4b4")};
  background: ${(p) => (p.$active ? "#efefef" : "linear-gradient(#f4f4f4, #dedede)")};
`;

const SplitRow = styled.div`
  height: 6px;
  display: flex;
  justify-content: center;
`;

const Overview = styled.div`
  flex: 1;
  min-height: 0;
  background: #fff;
  svg {
    display: block;
    width: 100%;
    height: 100%;
  }
`;

const SplitColumn = styled.div`
  flex: none;
  width: 6px;
  display: flex;
  align-items: center;
  span {
    width: 6px;
    height: 290px;
    ${dots}
    background-position: 0 0, 3px 3px;
  }
`;

const MapCanvas = styled.main`
  flex: 1;
  min-width: 0;
  border: 2px solid #5aa6f5;
  background: #c97789;
  svg {
    display: block;
    width: 100%;
    height: 100%;
  }
`;

/* ---------- status bar ---------- */

const StatusBar = styled.footer`
  height: 36px;
  display: flex;
  align-items: center;
  justify-content: flex-end;
  padding-right: 20px;
  font-size: 16px;
`;

const Caption = styled.label`
  margin: 0 ${(p) => p.$after ?? 4}px 0 ${(p) => p.$before || 0}px;
`;

const Field = styled.input`
  width: 182px;
  height: 28px;
  border: 1px solid #b0b0b0;
  border-radius: 3px;
  background: #fff;
  font-size: 15px;
  text-align: center;
`;

const StatusButton = styled.button`
  width: ${(p) => p.$width}px;
  height: 32px;
  border: 1px solid #909090;
  border-radius: 3px;
  background: linear-gradient(#fafafa, #ececec);
  display: grid;
  place-items: center;
  margin: 0 ${(p) => p.$after}px 0 1px;
`;

const ScaleWrap = styled.span`
  display: grid;
  align-items: center;
  & > select,
  &::after {
    grid-area: 1 / 1;
  }
  &::after {
    content: "";
    justify-self: end;
    margin-right: 5px;
    border: 4px solid transparent;
    border-top: 5px solid #000;
    border-bottom: 0;
    pointer-events: none;
  }
`;

const Scale = styled.select`
  appearance: none;
  width: 115px;
  height: 28px;
  border: 1px solid #b0b0b0;
  border-radius: 3px;
  padding: 0 3px;
  font-size: 15px;
  background: linear-gradient(to right, #fff 98px, #b4b4b4 98px 99px, #f1f1f1 99px);
`;

const Spin = styled.span`
  width: 119px;
  height: 32px;
  display: flex;
  border: 1px solid #b0b0b0;
  border-radius: 3px;
  background: #fff;
  overflow: hidden;
  margin-right: ${(p) => p.$after}px;
  input {
    flex: 1;
    min-width: 0;
    border: 0;
    outline: 0;
    padding: 0 3px;
    font-size: 15px;
  }
`;

const Steps = styled.span`
  width: 16px;
  display: flex;
  flex-direction: column;
  border-left: 1px solid #b4b4b4;
`;

const Step = styled.button`
  flex: 1;
  border: 0;
  border-top: ${(p) => (p.$down ? "1px solid #b4b4b4" : "0")};
  background: #f4f4f4;
  display: grid;
  place-items: center;
  &::before {
    content: "";
    border: 4px solid transparent;
    ${(p) =>
      p.$down
        ? "border-top: 5px solid #000; border-bottom: 0;"
        : "border-bottom: 5px solid #000; border-top: 0;"}
  }
`;

const PlainButton = styled.button`
  border: 0;
  background: none;
  display: flex;
  align-items: center;
  gap: 5px;
  margin-left: ${(p) => p.$before}px;
`;

/* ---------- data ---------- */

const MENUS = [
  "Progetto", "Modifica", "Visualizza", "Layer", "Impostazioni", "Plugins", "Vettore",
  "Raster", "Database", "Web", "MMQGIS", "Processing", "Guida",
];

// "|" starts a new group, a trailing "+" adds a menu arrow and "-" a disabled one
const TOOLS_TOP =
  "newFile,open,save,saveAs,newLayout,layoutManager,|,hand,pan,zoomIn,zoomOut,zoomNative,zoomFull,zoomSelection,zoomLayer,zoomLast,zoomNext,newBookmark,bookmark,refresh,|,identify,action-,select+,selectExpr+,deselect,table,abacus,sigma,ruler+,mapTip,annotation+,|,terrain,|,help,|".split(
    ","
  );

const TOOLS_EDIT =
  "pencils,pencil,saveEdits,addPoints,addCurve-,movePoints,nodeTool,trash,cut,copy,paste,|,setSquare,magnet,undo,redo,rotateFeature,simplify,addRing,addPart,fillRing,deleteRing,deletePart,reshape,offsetCurve,splitFeatures,splitParts,merge,pen,rotateSymbols-,|,python,earth,vertices,binoculars,streetView,pointPath,profile,leaf,parallelogram,epsilonPlus,yellowMap,bugList,identify".split(
    ","
  );

// "~" keeps the arrow's room but draws none
const SIDE_LAYERS =
  "addVector,addRaster,addFeather,postgis+,wmsGlobe+,wcsGlobe,wfsGlobe+,comma,virtualLayer,newVector+,satelliteNew,database,greenDoc,globeMenu~".split(
    ","
  );

const SIDE_MORE = "crosshair,compass,satellite,digitizeRed,topology".split(",");

const CLASSES = [
  ["CAGLIARI", "#db33cb"],
  ["CARBONIA-IGLESIAS", "#28b8cb"],
  ["MEDIO CAMPIDANO", "#d08444"],
  ["NUORO", "#c97789"],
  ["OGLIASTRA", "#6b89eb"],
  ["OLBIA-TEMPIO", "#19e472"],
  ["ORISTANO", "#8cf071"],
  ["SASSARI", "#c6ce7c"],
];

const BARS = [
  { code: "243", value: "13,95%", x: 957, top: 485 },
  { code: "244", value: "13,94%", x: 1117, top: 487 },
  { code: "311", value: "13,16%", x: 1276, top: 591 },
  { code: "323", value: "13,47%", x: 1435, top: 549 },
  { code: "324", value: "12,42%", x: 1594, top: 691 },
];

const PROVINCES = [
  ["#c6ce7c", "680,247 712,243 722,252 720,264 698,270 700,278 720,276 728,290 733,318 730,345 755,355 779,356 780,412 806,418 808,426 795,455 770,468 735,486 722,470 700,462 690,460 675,452 672,468 645,476 625,488 612,472 605,460 585,446 555,455 548,428 535,405 525,382 505,385 496,375 488,370 482,376 490,382 482,388 478,372 490,364 497,345 484,335 477,325 492,308 498,280 505,262 490,248 497,238 503,225 506,208 522,200 520,186 530,181 540,190 535,204 522,206 512,214 512,226 503,236 504,252 512,268 522,278 530,284 548,286 575,294 600,290 615,280 635,262 660,256"],
  ["#19e472", "680,247 690,230 712,210 735,178 760,174 770,168 776,152 768,138 780,134 790,129 802,136 800,150 820,158 835,160 845,166 852,185 858,180 866,170 874,176 888,180 886,194 876,208 880,222 890,232 896,244 885,250 872,255 895,262 905,268 915,280 922,290 918,305 930,312 932,328 942,350 915,340 895,340 890,352 850,356 840,380 810,403 782,400 779,356 755,355 730,345 733,318 728,290 720,276 700,278 698,270 720,264 722,252 712,243"],
  ["#c97789", "942,350 945,370 955,385 967,405 960,425 948,455 930,470 915,490 907,515 908,525 880,525 870,545 850,565 825,578 810,598 820,605 808,615 808,640 790,640 780,665 770,652 755,648 738,640 722,637 728,620 724,608 710,600 722,588 735,585 733,560 728,540 730,527 700,525 680,532 655,535 632,528 628,512 612,490 625,488 645,476 672,468 675,452 690,460 700,462 722,470 735,486 770,468 795,455 808,426 806,418 780,412 782,400 810,403 840,380 850,356 890,352 895,340 915,340"],
  ["#8cf071", "555,455 585,446 605,460 612,490 628,512 632,528 655,535 680,532 700,525 730,527 728,540 733,560 735,585 722,588 710,600 724,608 728,620 722,637 738,640 755,648 770,660 755,668 732,693 710,690 700,712 685,735 650,745 620,738 605,725 582,715 592,700 598,660 590,645 568,643 562,656 550,640 552,592 575,580 578,560 570,540 576,520 572,500 560,480 548,475"],
  ["#d08444", "567,695 582,715 605,725 620,738 650,745 685,735 700,712 710,690 732,693 747,700 742,735 728,765 725,780 730,800 715,812 719,828 680,833 640,843 625,838 610,820 590,805 547,812 568,770 570,735"],
  ["#28b8cb", "547,812 590,805 610,820 625,838 640,843 652,905 672,918 682,955 680,965 625,970 617,1000 600,990 600,968 580,962 565,940 552,915 540,900 560,875 545,845"],
  ["#db33cb", "640,843 680,833 719,828 715,812 730,800 725,780 728,765 742,735 747,700 732,693 755,668 780,665 790,640 805,640 808,675 825,690 842,708 832,720 848,745 880,755 917,775 915,815 905,850 912,870 898,885 897,910 890,936 884,945 870,935 850,930 830,910 790,902 772,915 755,905 732,930 732,950 740,965 735,982 708,1010 682,1032 650,1012 620,1032 612,1025 617,1000 625,970 680,965 682,955 672,918 652,905"],
  ["#6b89eb", "908,525 925,552 942,575 932,600 936,630 927,660 926,700 917,730 917,775 880,755 848,745 832,720 842,708 825,690 808,675 808,615 820,605 810,598 825,578 850,565 870,545 880,525"],
  ["#28b8cb", "497,928 510,918 526,912 522,948 508,948"],
  ["#28b8cb", "535,947 550,944 570,958 562,990 555,1001 540,975"],
];

const ISLETS =
  "M820 112l8-5 10 4M840 116l4 8M836 130l6 6 8-2 6 8-8 4M846 124l8 4M846 142l16 10M850 152l4 10M838 150l8 6M830 146l6 4M874 160l4 2M890 184l6 12M880 214l14 8M898 226l18-4M900 228l4 16M872 255l36 8M915 262l24-6M925 278l16-6M948 270l5 2M930 290l6-12M522 608l5 1M513 650l4 1M548 590l-4 4M930 628l8 2M918 785l4 4M906 932l3 2M880 944l8 10M550 1038l4 0M485 380l5 4";

/* ---------- components ---------- */

function Tools({ items, active }) {
  return items.map((item, i) => {
    if (item === "|") return <Handle key={i} />;
    const name = item.replace(/[+-]$/, "");
    return (
      <React.Fragment key={i}>
        <ToolButton $on={name === active} aria-label={name}>
          <Icon name={name} />
        </ToolButton>
        {name !== item && <ArrowButton $off={item.endsWith("-")} aria-label={name + " menu"} />}
      </React.Fragment>
    );
  });
}

function SideTools({ items }) {
  return items.map((item) => {
    const name = item.replace(/[+~]$/, "");
    return (
      <SideRow key={item}>
        <ToolButton aria-label={name}>
          <Icon name={name} />
        </ToolButton>
        {item.endsWith("+") && <ArrowButton aria-label={name + " menu"} />}
        {item.endsWith("~") && <ArrowSpace />}
      </SideRow>
    );
  });
}

function PanelHeader({ title }) {
  return (
    <PanelHead>
      <Grip />
      <PanelTitle>{title}</PanelTitle>
      <Grip />
      <PanelButton aria-label="Float">
        <svg width="10" height="10" fill="none" stroke="#000" strokeWidth="1.5">
          <path d="M3.500 3V1.500h5v4H7M1.500 4.500h5v4h-5z" />
        </svg>
      </PanelButton>
      <PanelButton aria-label="Close">
        <svg width="10" height="10" stroke="#000" strokeWidth="1.6">
          <path d="M1.500 1.500l7 7M8.500 1.500l-7 7" />
        </svg>
      </PanelButton>
    </PanelHead>
  );
}

function LayerTree() {
  return (
    <Tree>
      <TreeRow $current>
        <label>
          <Lines width="23" height="23" stroke="#999" strokeDasharray="1 1">
            <path d="M10.500 2v21M11 12.500h8" />
          </Lines>
          <Check type="checkbox" defaultChecked />
          <svg width="24" height="22" viewBox="0 0 24 22">
            <path d="M0 6Q4 0 12 0v22H0z" fill="#1f9d62" />
            <path d="M12 0q9 1 12 5v17H12z" fill="#2f74dc" />
            <path d="M0 15l12-2v9H0z" fill="#c49a4c" />
            <path d="M12 18l6 4h-9z" fill="#c44" />
            <circle cx="12" cy="18" r="5" fill="#fff" />
          </svg>
          <LayerName $group $current>centroidi_sardegna</LayerName>
        </label>
      </TreeRow>
      <TreeRow>
        <label>
          <Lines width="23" height="23" fill="none" stroke="#999">
            <path d="M10.500 0v6M15 11.500h5" strokeDasharray="1 1" />
            <rect x="6.5" y="7.5" width="8" height="8" fill="#fff" />
            <path d="M8 11.500h5" stroke="#333" />
          </Lines>
          <Check type="checkbox" defaultChecked />
          <svg width="24" height="20" viewBox="0 0 24 20">
            <path d="M1 7q0-6 7-5 4 3 8 1 7-3 7 4 1 8-4 7-4-3-7-1-3 4-8 2-3-1-3-8z" fill="#dedede" stroke="#8d8d8d" strokeWidth="1.3" />
          </svg>
          <LayerName $group>joinato</LayerName>
        </label>
      </TreeRow>
      {CLASSES.map(([name, color], i) => (
        <TreeRow $child key={name}>
          <label>
            <Lines width="43" height="22" stroke="#999" strokeDasharray="1 1">
              <path d={`M30.500 0V${i === CLASSES.length - 1 ? 11 : 22}M31 11.500h8`} />
            </Lines>
            <Check type="checkbox" defaultChecked />
            <Swatch $color={color} />
            <LayerName>{name}</LayerName>
          </label>
        </TreeRow>
      ))}
    </Tree>
  );
}

function OverviewMap() {
  return (
    <Overview>
      <svg viewBox="198 60 1047 1026">
        <g stroke={OUTLINE} strokeWidth="4" strokeLinejoin="round">
          {PROVINCES.map(([color, points]) => (
            <polygon key={points} fill={color} points={points} />
          ))}
        </g>
        <path d={ISLETS} fill="none" stroke={OUTLINE} strokeWidth="7" strokeLinecap="round" />
        <rect x="703" y="487" width="184" height="109" fill="none" stroke="#f00" strokeWidth="3" />
      </svg>
    </Overview>
  );
}

function MainMap() {
  return (
    <MapCanvas>
      <svg viewBox="423 162 1495 878" preserveAspectRatio="xMidYMid slice">
        <g stroke={OUTLINE} strokeWidth="2" strokeLinejoin="round">
          <polygon
            fill="#8cf071"
            points="400,495 422,491 452,483 488,478 507,478 525,481 547,471 584,461 605,474 602,489 618,502 627,505 636,507 655,521 666,537 656,552 624,570 621,579 622,590 635,593 640,603 656,610 666,628 671,655 670,685 668,691 648,716 631,722 666,747 662,749 664,763 678,785 692,821 710,842 710,886 712,942 719,949 724,967 712,982 692,1013 689,1022 671,1010 655,996 643,982 622,964 605,960 597,962 570,983 542,1006 520,1041 500,1060 400,1060"
          />
          <polygon
            fill="#c6ce7c"
            points="635,150 643,161 676,203 688,214 691,217 688,210 693,203 703,200 707,196 716,180 720,177 729,161 735,150"
          />
          <polygon
            fill="#6b89eb"
            points="1940,512 1919,493 1880,457 1864,475 1862,506 1865,526 1857,545 1844,557 1821,560 1817,557 1801,571 1772,611 1765,641 1762,672 1758,678 1736,687 1726,688 1720,687 1709,698 1699,716 1677,750 1680,774 1674,789 1664,812 1647,820 1630,823 1622,831 1614,842 1599,844 1590,847 1580,845 1561,851 1551,861 1547,867 1548,880 1536,896 1507,913 1490,908 1481,911 1465,907 1452,909 1431,914 1424,923 1408,955 1400,980 1399,992 1394,1008 1387,1018 1368,1019 1340,1024 1328,1041 1314,1060 1940,1060"
          />
        </g>
        <g stroke="#d9bcc4">
          {[478.5, 545.5, 612.5, 678.5, 746.5].map((y) => (
            <path key={y} d={`M929 ${y}h798`} />
          ))}
        </g>
        {BARS.map((bar) => (
          <g key={bar.code} fontFamily="Roboto, sans-serif" fontSize="17" fontWeight="500" textAnchor="middle">
            <rect x={bar.x} y={bar.top} width="104" height={746 - bar.top} fill="#5f97f6" />
            <path d={`M${bar.x + 0.5} 746V${bar.top}M${bar.x + 104.5} 746V${bar.top}`} stroke="#b9b3d8" />
            <text x={bar.x + 52} y={bar.top + 17} stroke="#fff" strokeWidth="3" strokeLinejoin="round" paintOrder="stroke">
              {bar.value}
            </text>
            <text x={bar.x + 52} y="772">
              {bar.code}
            </text>
          </g>
        ))}
      </svg>
    </MapCanvas>
  );
}

function SpinBox({ id, label, value, after }) {
  return (
    <>
      <Caption htmlFor={id}>{label}</Caption>
      <Spin $after={after}>
        <input id={id} defaultValue={value} />
        <Steps>
          <Step aria-label={label + " +"} />
          <Step $down aria-label={label + " -"} />
        </Steps>
      </Spin>
    </>
  );
}

function Status() {
  return (
    <StatusBar>
      <Caption htmlFor="coords">Coordinata</Caption>
      <Field id="coords" defaultValue="504526,4452137" />
      <StatusButton $width={21} $after={8} aria-label="Extents">
        <svg width="17" height="22" viewBox="0 0 17 22" fill="none" stroke="#333" strokeWidth="1.6">
          <ellipse cx="6" cy="7" rx="3" ry="5" transform="rotate(-25 6 7)" fill="#bbb" />
          <ellipse cx="10" cy="14" rx="4" ry="4.5" fill="#ddd" />
          <path d="M5 3l6 13M3 9l7-4M6 14l8-3M14 3l-3 4" />
        </svg>
      </StatusButton>
      <Caption htmlFor="scale">Scala</Caption>
      <ScaleWrap>
        <Scale id="scale" defaultValue="1:202.216">
          <option>1:202.216</option>
        </Scale>
      </ScaleWrap>
      <StatusButton $width={33} $after={10} aria-label="Lock scale">
        <svg width="20" height="26" viewBox="0 0 20 26" fill="none">
          <path d="M4.500 13V8q0-6 5.500-6t5.500 6v5" stroke="#999" strokeWidth="3" />
          <rect x="1.5" y="12.5" width="17" height="12" rx="1" fill="#f2dc1e" stroke="#c4a000" />
        </svg>
      </StatusButton>
      <SpinBox id="magnifier" label="Magnifier" value="100%" after={9} />
      <SpinBox id="rotation" label="Rotazione" value="0,0" after={7} />
      <Check id="render" type="checkbox" defaultChecked />
      <Caption htmlFor="render" $before={9} $after={0}>
        Visualizza
      </Caption>
      <PlainButton $before={18}>
        <svg width="20" height="20" viewBox="0 0 20 20" fill="none" stroke="#333" strokeWidth="1.6">
          <circle cx="10" cy="10" r="8.5" fill="#aaa" strokeWidth="2" />
          <ellipse cx="10" cy="10" rx="4" ry="8.5" />
          <path d="M10 0v20M0 10h20M3 6h14M3 14h14" />
        </svg>
        EPSG:23032 (OTF)
      </PlainButton>
      <PlainButton $before={26} aria-label="Messages">
        <svg width="22" height="22" viewBox="0 0 22 22">
          <path d="M11 1c14 0 14 13 5 15l3 5-8-4C-3 17-3 1 11 1z" fill="#666" />
          <path d="M5 9h3M10 9h3M15 9h3" stroke="#fff" strokeWidth="2.5" />
        </svg>
      </PlainButton>
    </StatusBar>
  );
}

export default function App() {
  return (
    <Window>
      <GlobalStyle />
      <TitleBar>
        <svg width="22" height="26" viewBox="0 0 22 26" fill="none">
          <ellipse cx="11" cy="12" rx="5.5" ry="8.5" stroke="#b4c63a" strokeWidth="5" />
          <ellipse cx="11" cy="12" rx="5.5" ry="8.5" stroke="#dcec6a" strokeWidth="3.4" />
          <path d="M11 19q5 0 7 5" stroke="#c9dc48" strokeWidth="3" />
          <path d="M4 22L16 6" stroke="#2d7d32" strokeWidth="2.4" />
          <path d="M19 1l-1 8-5-4zM1 19l5 1-2 5z" fill="#1f6a27" />
        </svg>
        <Title>QGIS 6035f19 - torte</Title>
        <FrameButton aria-label="Minimize">
          <svg width="16" height="16" stroke="#000"><path d="M0 8.500h16" /></svg>
        </FrameButton>
        <FrameButton aria-label="Restore">
          <svg width="16" height="16" fill="none" stroke="#000">
            <path d="M3.500 3V.5h12v12H13M.5 3.500h12v12H.5z" />
          </svg>
        </FrameButton>
        <FrameButton aria-label="Close">
          <svg width="16" height="16" stroke="#000"><path d="M.5.5l15 15M15.500.5l-15 15" /></svg>
        </FrameButton>
      </TitleBar>
      <MenuBar>
        {MENUS.map((menu) => (
          <MenuButton key={menu}>{menu}</MenuButton>
        ))}
      </MenuBar>
      <Toolbar>
        <Handle $width={11} />
        <Tools items={TOOLS_TOP} active="zoomIn" />
        <SearchBox>
          <SearchInput aria-label="Search" />
          <ClearButton aria-label="Clear">
            <svg width="24" height="11" viewBox="0 0 24 11">
              <path d="M0 5.500L7 .5h17v10H7z" />
              <path d="M12 2.500l6 6M18 2.500l-6 6" stroke="#fff" strokeWidth="2" />
            </svg>
          </ClearButton>
          <DropButton aria-label="Show results" />
        </SearchBox>
        <ToolButton aria-label="Find">
          <Icon name="bigLens" />
        </ToolButton>
      </Toolbar>
      <Toolbar>
        <Handle $width={11} />
        <Tools items={TOOLS_EDIT} />
        <Overflow>»</Overflow>
      </Toolbar>
      <Body>
        <SideBar>
          <SideHandle />
          <SideTools items={SIDE_LAYERS} />
          <SideHandle $middle />
          <SideTools items={SIDE_MORE} />
          <SideOverflow aria-label="More">
            <svg width="8" height="10" fill="none" stroke="#000" strokeWidth="1.6">
              <path d="M1 1l3 3 3-3M1 5l3 3 3-3" />
            </svg>
          </SideOverflow>
        </SideBar>
        <Dock>
          <PanelHeader title="Layers Panel" />
          <PanelTools>
            <SmallTool aria-label="Add group"><Icon name="addGroup" size={22} /></SmallTool>
            <SmallTool aria-label="Visibility"><Icon name="eye" size={24} /></SmallTool>
            <SmallTool aria-label="Filter legend"><Icon name="filter" size={22} /></SmallTool>
            <SmallTool aria-label="Filter by expression"><Icon name="filterExpr" size={22} /></SmallTool>
            <ArrowButton aria-label="Expression menu" />
            <SmallTool aria-label="Expand all"><Icon name="expand" size={22} /></SmallTool>
            <SmallTool aria-label="Collapse all"><Icon name="collapse" size={22} /></SmallTool>
            <SmallTool aria-label="Remove layer"><Icon name="removeLayer" size={22} /></SmallTool>
            <SmallTool $last aria-label="Styling"><Icon name="broom" size={22} /></SmallTool>
          </PanelTools>
          <LayerTree />
          <Tabs>
            <Tab>Browser Panel</Tab>
            <Tab $active>Layers Panel</Tab>
          </Tabs>
          <SplitRow>
            <Grip $width={114} />
          </SplitRow>
          <PanelHeader title="Overview Panel" />
          <OverviewMap />
        </Dock>
        <SplitColumn>
          <span />
        </SplitColumn>
        <MainMap />
      </Body>
      <Status />
    </Window>
  );
}
